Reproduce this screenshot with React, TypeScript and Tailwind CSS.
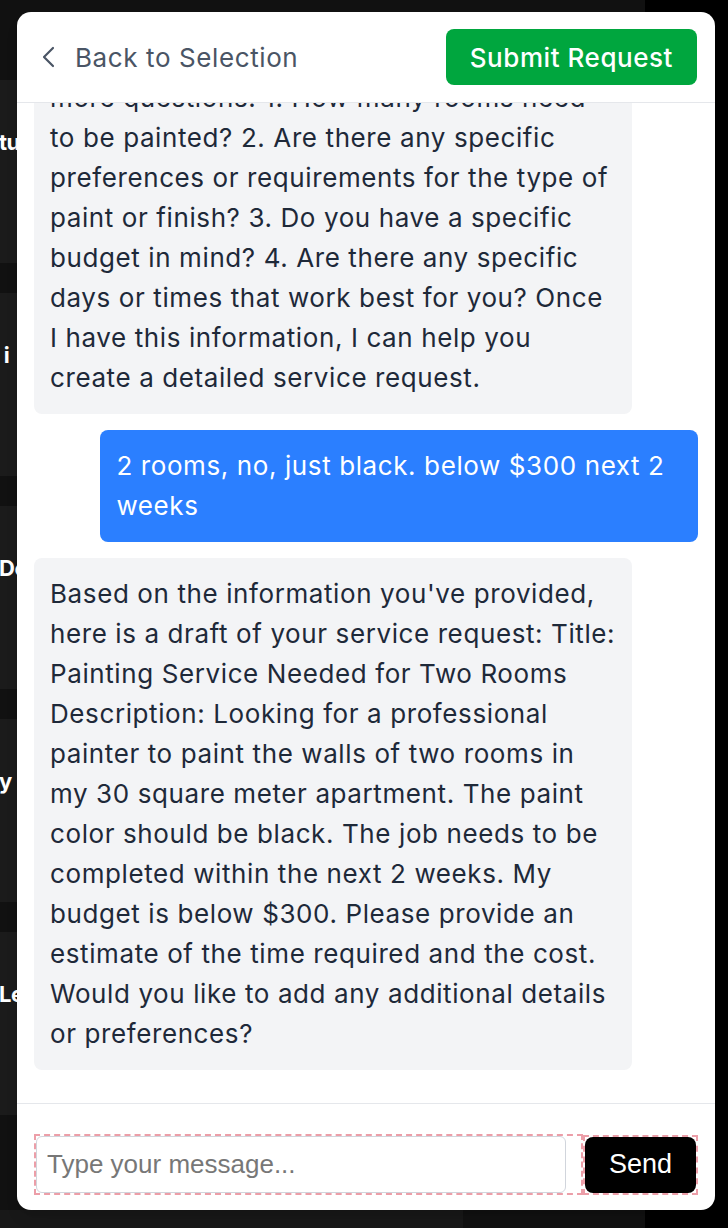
const backdropCards = ['tural Repairs', ' i  Painting', 'De ck Work', 'y Cleanup', 'Le ak Repair'];

type Message = { role: 'assistant' | 'user'; text: React.ReactNode };

const messages: Message[] = [
  {
    role: 'assistant',
    text: (
      <>
        Thank you for the details about your apartment. To put together a good request I need to ask you a few
        <br />
        more questions: 1. How many rooms need to be painted? 2. Are there any specific preferences or requirements
        for the type of paint or finish? 3. Do you have a specific budget in mind? 4. Are there any specific days or
        times that work best for you? Once I have this information, I can help you create a detailed service request.
      </>
    ),
  },
  { role: 'user', text: '2 rooms, no, just black. below $300 next 2 weeks' },
  {
    role: 'assistant',
    text: "Based on the information you've provided, here is a draft of your service request: Title: Painting Service Needed for Two Rooms Description: Looking for a professional painter to paint the walls of two rooms in my 30 square meter apartment. The paint color should be black. The job needs to be completed within the next 2 weeks. My budget is below $300. Please provide an estimate of the time required and the cost. Would you like to add any additional details or preferences?",
  },
];

export default function App() {
  return (
    <div className="relative h-[1228px] w-[728px] overflow-hidden bg-black font-['Inter',sans-serif]">
      {/* page behind the modal */}
      <div className="flex h-full w-[645px] flex-col gap-[30px] bg-[#111111] pt-[80px]">
        {backdropCards.map((label) => (
          <div key={label} className="h-[183px] bg-[#1b1b1b] pt-[46px]">
            <span className="-ml-[1px] whitespace-pre text-[22px] font-bold tracking-[-0.5px] text-white">{label}</span>
          </div>
        ))}
      </div>
      <div className="absolute bottom-0 left-0 h-[18px] w-[463px] bg-[#181818]" />

      {/* modal */}
      <div className="absolute left-[17px] top-[12px] flex h-[1198px] w-[698px] flex-col overflow-hidden rounded-[14px] bg-white shadow-lg">
        <div className="flex h-[91px] shrink-0 items-center justify-between border-b border-gray-200 pl-[24px] pr-[18px]">
          <button className="flex items-center gap-[18px] text-[26px] tracking-[0.6px] text-gray-600">
            <svg className="h-[22px] w-[16px]" viewBox="0 0 16 22" fill="none" stroke="currentColor" strokeWidth={2.2} strokeLinecap="round" strokeLinejoin="round">
              <path d="M12 2 3 11l9 9" />
            </svg>
            Back to Selection
          </button>
          <button className="h-[56px] rounded-lg bg-green-600 px-[24px] text-[26px] font-medium tracking-[0.55px] text-white">
            Submit Request
          </button>
        </div>

        <div className="flex min-h-0 flex-1 flex-col justify-end gap-4 overflow-hidden px-[17px] pb-[33px]">
          {messages.map((m, i) => (
            <div
              key={i}
              className={`max-w-[90%] shrink-0 rounded-lg p-4 text-[26px] leading-[40px] tracking-[0.6px] ${
                m.role === 'user' ? 'self-end bg-blue-500 text-white' : 'self-start bg-gray-100 text-gray-800'
              }`}
            >
              {m.text}
            </div>
          ))}
        </div>

        <div className="flex shrink-0 items-center border-t border-gray-200 px-[17px] pb-[15px] pt-[30px]">
          <div className="flex-1 border-2 border-dashed border-[#ec9ea8] pr-[15px]">
            <input
              placeholder="Type your message..."
              className="h-[57px] w-full rounded-md border border-gray-300 px-[10px] font-['Liberation_Sans',sans-serif] text-[26px] text-gray-800 placeholder:text-[#777777]"
            />
          </div>
          <div className="border-2 border-dashed border-[#ec9ea8]">
            <button className="h-[56px] w-[111px] rounded-lg bg-black font-['Liberation_Sans',sans-serif] text-[27px] text-white">
              Send
            </button>
          </div>
        </div>
      </div>
    </div>
  );
}
